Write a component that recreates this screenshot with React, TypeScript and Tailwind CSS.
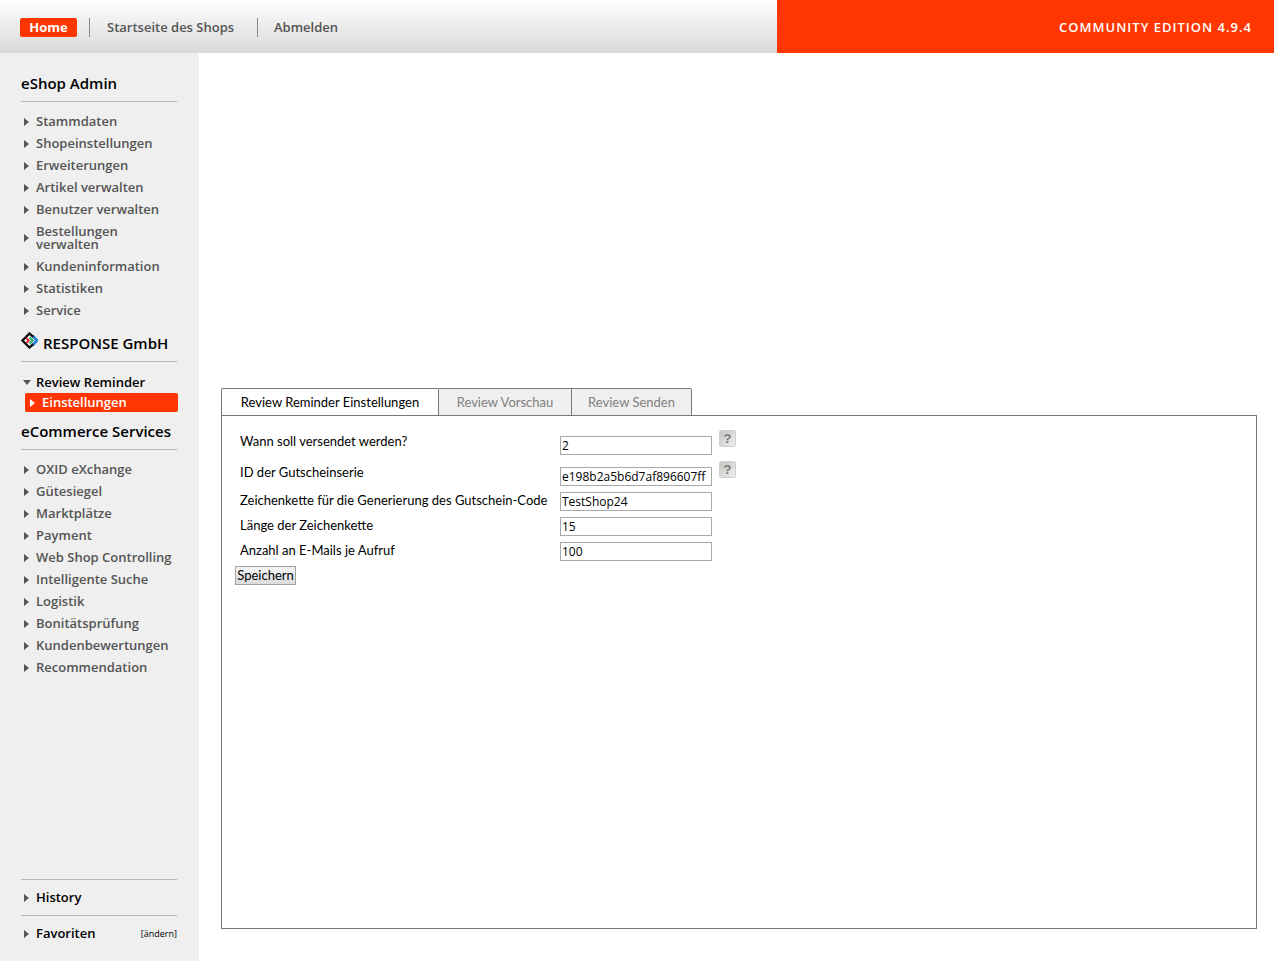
import { ReactNode } from "react"
import clsx from "clsx"

interface FormField {
  id: string
  label: string
  value: string
  help?: boolean
}

const adminLinks = [
  "Stammdaten",
  "Shopeinstellungen",
  "Erweiterungen",
  "Artikel verwalten",
  "Benutzer verwalten",
  "Bestellungen verwalten",
  "Kundeninformation",
  "Statistiken",
  "Service",
]

const serviceLinks = [
  "OXID eXchange",
  "Gütesiegel",
  "Marktplätze",
  "Payment",
  "Web Shop Controlling",
  "Intelligente Suche",
  "Logistik",
  "Bonitätsprüfung",
  "Kundenbewertungen",
  "Recommendation",
]

const fields: FormField[] = [
  { id: "days", label: "Wann soll versendet werden?", value: "2", help: true },
  { id: "series", label: "ID der Gutscheinserie", value: "e198b2a5b6d7af896607ff", help: true },
  { id: "prefix", label: "Zeichenkette für die Generierung des Gutschein-Code", value: "TestShop24" },
  { id: "length", label: "Länge der Zeichenkette", value: "15" },
  { id: "mails", label: "Anzahl an E-Mails je Aufruf", value: "100" },
]

function Arrow({ className }: { className?: string }) {
  return (
    <svg viewBox="0 0 5 8" className={clsx("h-2 w-[5px] shrink-0", className)} fill="currentColor" aria-hidden="true">
      <path d="M0 0 L5 4 L0 8 Z" />
    </svg>
  )
}

function ResponseLogo() {
  return (
    <svg viewBox="0 0 17 17" className="mb-1 h-[17px] w-[17px] shrink-0" fill="none" aria-hidden="true">
      <path d="M8.5 0.5 L16.5 8.5 L8.5 16.5 L0.5 8.5 Z" fill="#fff" />
      <path d="M11.5 3.8 L15.8 8.5 L11.5 13.2" stroke="#2a86d8" strokeWidth="3" />
      <path d="M12.2 4.8 L8.5 1.5 L1.5 8.5 L8.5 15.5 L12.2 12.2" stroke="#111" strokeWidth="2.4" />
      <path d="M5.4 6 L7.8 8.5 L5.4 11" stroke="#e8344a" strokeWidth="2.2" />
      <path d="M8.6 5.4 L11.6 8.5 L8.6 11.6" stroke="#35b36b" strokeWidth="2.2" />
    </svg>
  )
}

function SectionTitle({ children, className }: { children: ReactNode; className?: string }) {
  return (
    <h2
      className={clsx(
        "flex items-center gap-[5px] whitespace-nowrap border-b border-[#b8b8b8] pb-2 text-[15px] font-semibold leading-5 text-black",
        className
      )}
    >
      {children}
    </h2>
  )
}

function NavList({ items }: { items: string[] }) {
  return (
    <ul className="flex flex-col gap-[9px] pt-[13px]">
      {items.map((item) => (
        <li key={item}>
          <a href="#" className="flex items-center gap-[7px] pl-[3px] text-[13px] font-semibold leading-[13px] text-[#555]">
            <Arrow />
            <span>{item}</span>
          </a>
        </li>
      ))}
    </ul>
  )
}

function Header() {
  return (
    <header className="flex h-[53px] shrink-0 text-[13px] font-semibold">
      <nav className="flex flex-1 items-center bg-linear-to-b from-white to-[#d9d9d9] pl-5 pt-[2px] text-[#555]">
        <a href="#" className="w-[57px] rounded-[2px] bg-[#ff3600] text-center font-bold leading-[19px] text-white">
          Home
        </a>
        <a href="#" className="ml-3 w-[168px] border-l border-[#888] pl-[17px] leading-[19px]">
          Startseite des Shops
        </a>
        <a href="#" className="border-l border-[#888] pl-4 leading-[19px]">
          Abmelden
        </a>
      </nav>
      <div className="flex w-[39%] items-center justify-end bg-[#ff3600] pr-[22px] pt-[2px] tracking-[1px] text-white">
        COMMUNITY EDITION 4.9.4
      </div>
    </header>
  )
}

function Sidebar() {
  return (
    <aside className="flex w-[199px] shrink-0 flex-col bg-[#efefef] pb-[10px] pl-[21px] pr-[22px]">
      <SectionTitle className="pt-5">eShop Admin</SectionTitle>
      <NavList items={adminLinks} />

      <SectionTitle className="pt-[15px]">
        <ResponseLogo />
        RESPONSE GmbH
      </SectionTitle>
      <a
        href="#"
        className="mt-[14px] flex items-center gap-[5px] pl-[2px] text-[13px] font-semibold leading-[13px] text-black"
      >
        <svg viewBox="0 0 8 5" className="h-[5px] w-2 shrink-0" fill="#555" aria-hidden="true">
          <path d="M0 0 H8 L4 5 Z" />
        </svg>
        Review Reminder
      </a>
      <a
        href="#"
        className="-mr-px ml-1 mt-1 flex items-center gap-[7px] rounded-[2px] bg-[#ff3600] pl-[5px] text-[13px] font-semibold leading-[19px] text-white"
      >
        <Arrow />
        Einstellungen
      </a>

      <SectionTitle className="pt-[9px]">eCommerce Services</SectionTitle>
      <NavList items={serviceLinks} />

      {/* Bottom links */}
      <div className="mt-auto pt-6 text-[13px] font-semibold text-black">
        <div className="flex h-9 items-center border-t border-[#b8b8b8] pl-[3px]">
          <a href="#" className="flex items-center gap-[7px]">
            <Arrow className="text-[#555]" />
            History
          </a>
        </div>
        <div className="flex h-9 items-center justify-between border-t border-[#b8b8b8] pl-[3px]">
          <a href="#" className="flex items-center gap-[7px]">
            <Arrow className="text-[#555]" />
            Favoriten
          </a>
          <a href="#" className="text-[9px] font-normal">
            [ändern]
          </a>
        </div>
      </div>
    </aside>
  )
}

function Tabs() {
  const tab = "border-t border-[#777] text-center leading-[26px]"
  return (
    <div className="-mb-px flex text-[13px]" role="tablist">
      <button role="tab" aria-selected="true" className={clsx(tab, "w-[218px] rounded-t-[2px] border-x bg-white pb-px text-black")}>
        Review Reminder Einstellungen
      </button>
      <button role="tab" aria-selected="false" className={clsx(tab, "w-[133px] border-b border-r bg-[#efefef] text-[#808080]")}>
        Review Vorschau
      </button>
      <button
        role="tab"
        aria-selected="false"
        className={clsx(tab, "w-[120px] rounded-tr-[2px] border-b border-r bg-[#efefef] text-[#808080]")}
      >
        Review Senden
      </button>
    </div>
  )
}

function HelpButton() {
  return (
    <button
      type="button"
      aria-label="Hilfe"
      className="ml-[7px] flex h-[17px] w-[17px] items-center justify-center rounded-[2px] border border-[#d0d0d0] bg-linear-to-br from-[#c4c4c4] to-[#f0f0f0] font-['Liberation_Sans',sans-serif] text-[13px] font-bold leading-none text-[#777]"
    >
      ?
    </button>
  )
}

export default function App() {
  return (
    <div className="flex min-h-screen flex-col bg-white font-['Open_Sans',sans-serif] text-black">
      <Header />
      <div className="flex flex-1">
        <Sidebar />
        <main className="flex min-w-0 flex-1 flex-col pb-8 pl-[22px] pr-[17px] pt-[335px] font-['Lato',sans-serif]">
          <Tabs />
          <form className="flex-1 border border-[#777] pl-[13px] pt-[14px] text-[13px]">
            <div className="flex flex-col gap-[6px] pl-[5px]">
              {fields.map((field) => (
                <div key={field.id} className={clsx("flex", field.help && "h-[25px]")}>
                  <label
                    htmlFor={field.id}
                    className={clsx("w-80 whitespace-nowrap", field.help ? "leading-[22px]" : "leading-[17px]")}
                  >
                    {field.label}
                  </label>
                  <input
                    id={field.id}
                    type="text"
                    defaultValue={field.value}
                    className="h-[19px] w-[152px] self-end border border-[#a9a9a9] bg-white px-px font-['Open_Sans',sans-serif] text-[12px] leading-[17px]"
                  />
                  {field.help && <HelpButton />}
                </div>
              ))}
            </div>
            <button
              type="submit"
              className="mt-[5px] h-[19px] w-[61px] border border-[#a0a0a0] bg-linear-to-b from-[#f4f4f4] to-[#dcdcdc] leading-[17px]"
            >
              Speichern
            </button>
          </form>
        </main>
      </div>
    </div>
  )
}
